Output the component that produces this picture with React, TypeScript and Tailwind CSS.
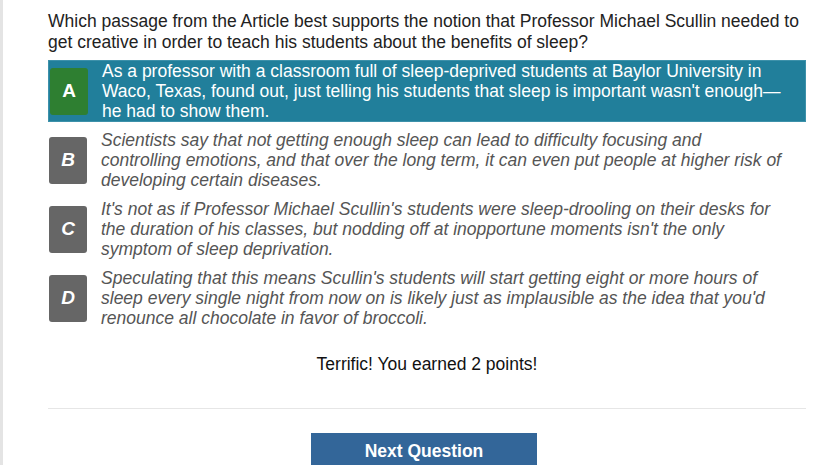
import React from 'react';

interface Choice {
  letter: string;
  lines: string[];
}

const choices: Choice[] = [
  {
    letter: 'A',
    lines: [
      'As a professor with a classroom full of sleep-deprived students at Baylor University in',
      "Waco, Texas, found out, just telling his students that sleep is important wasn't enough\u2014",
      'he had to show them.',
    ],
  },
  {
    letter: 'B',
    lines: [
      'Scientists say that not getting enough sleep can lead to difficulty focusing and',
      'controlling emotions, and that over the long term, it can even put people at higher risk of',
      'developing certain diseases.',
    ],
  },
  {
    letter: 'C',
    lines: [
      "It's not as if Professor Michael Scullin's students were sleep-drooling on their desks for",
      "the duration of his classes, but nodding off at inopportune moments isn't the only",
      'symptom of sleep deprivation.',
    ],
  },
  {
    letter: 'D',
    lines: [
      "Speculating that this means Scullin's students will start getting eight or more hours of",
      "sleep every single night from now on is likely just as implausible as the idea that you'd",
      'renounce all chocolate in favor of broccoli.',
    ],
  },
];

// the answer the student picked (and got right)
const selected = 'A';

const ChoiceRow: React.FC<{ choice: Choice }> = ({ choice }) => {
  const isSelected = choice.letter === selected;
  return (
    <div
      className={`flex items-center h-[62px] ${
        isSelected ? 'bg-[#217f9b] border border-[#3d91aa]' : 'italic'
      }`}
    >
      <div
        className={`flex items-center justify-center shrink-0 w-[38px] h-[47px] ml-[1px] rounded-[3px] text-[19px] font-bold text-white ${
          isSelected ? 'bg-[#2e7f31]' : 'bg-[#666666]'
        }`}
      >
        {choice.letter}
      </div>
      <p
        className={`ml-[14px] text-[17.5px] leading-[20px] whitespace-nowrap ${
          isSelected ? 'text-white' : 'text-[#555555]'
        }`}
      >
        {choice.lines.map((line, i) => (
          <React.Fragment key={i}>
            {line}
            {i < choice.lines.length - 1 && <br />}
          </React.Fragment>
        ))}
      </p>
    </div>
  );
};

const App: React.FC = () => {
  return (
    <div className="flex min-h-[465px] bg-white font-['Liberation_Sans',Arial,sans-serif]">
      <div className="w-[3px] shrink-0 bg-[#e4e4e4]" />
      <main className="ml-[45px] w-[758px] pt-[11px]">
        <p className="text-[17.5px] leading-[21px] text-[#222222] whitespace-nowrap">
          Which passage from the Article best supports the notion that Professor Michael Scullin needed to
          <br />
          get creative in order to teach his students about the benefits of sleep?
        </p>

        <div className="mt-[7px] flex flex-col gap-[7px]">
          {choices.map(c => (
            <ChoiceRow key={c.letter} choice={c} />
          ))}
        </div>

        <p className="mt-[25px] text-center text-[17.5px] leading-[20px] text-[#111111]">
          Terrific! You earned 2 points!
        </p>

        <div className="mt-[34px] h-px bg-[#e6e6e6]" />

        <div className="mt-[24px] flex justify-center pr-[6px]">
          <button
            type="button"
            className="w-[226px] h-[36px] bg-[#336699] text-white text-[17.5px] font-bold"
          >
            Next Question
          </button>
        </div>
      </main>
    </div>
  );
};

export default App;
